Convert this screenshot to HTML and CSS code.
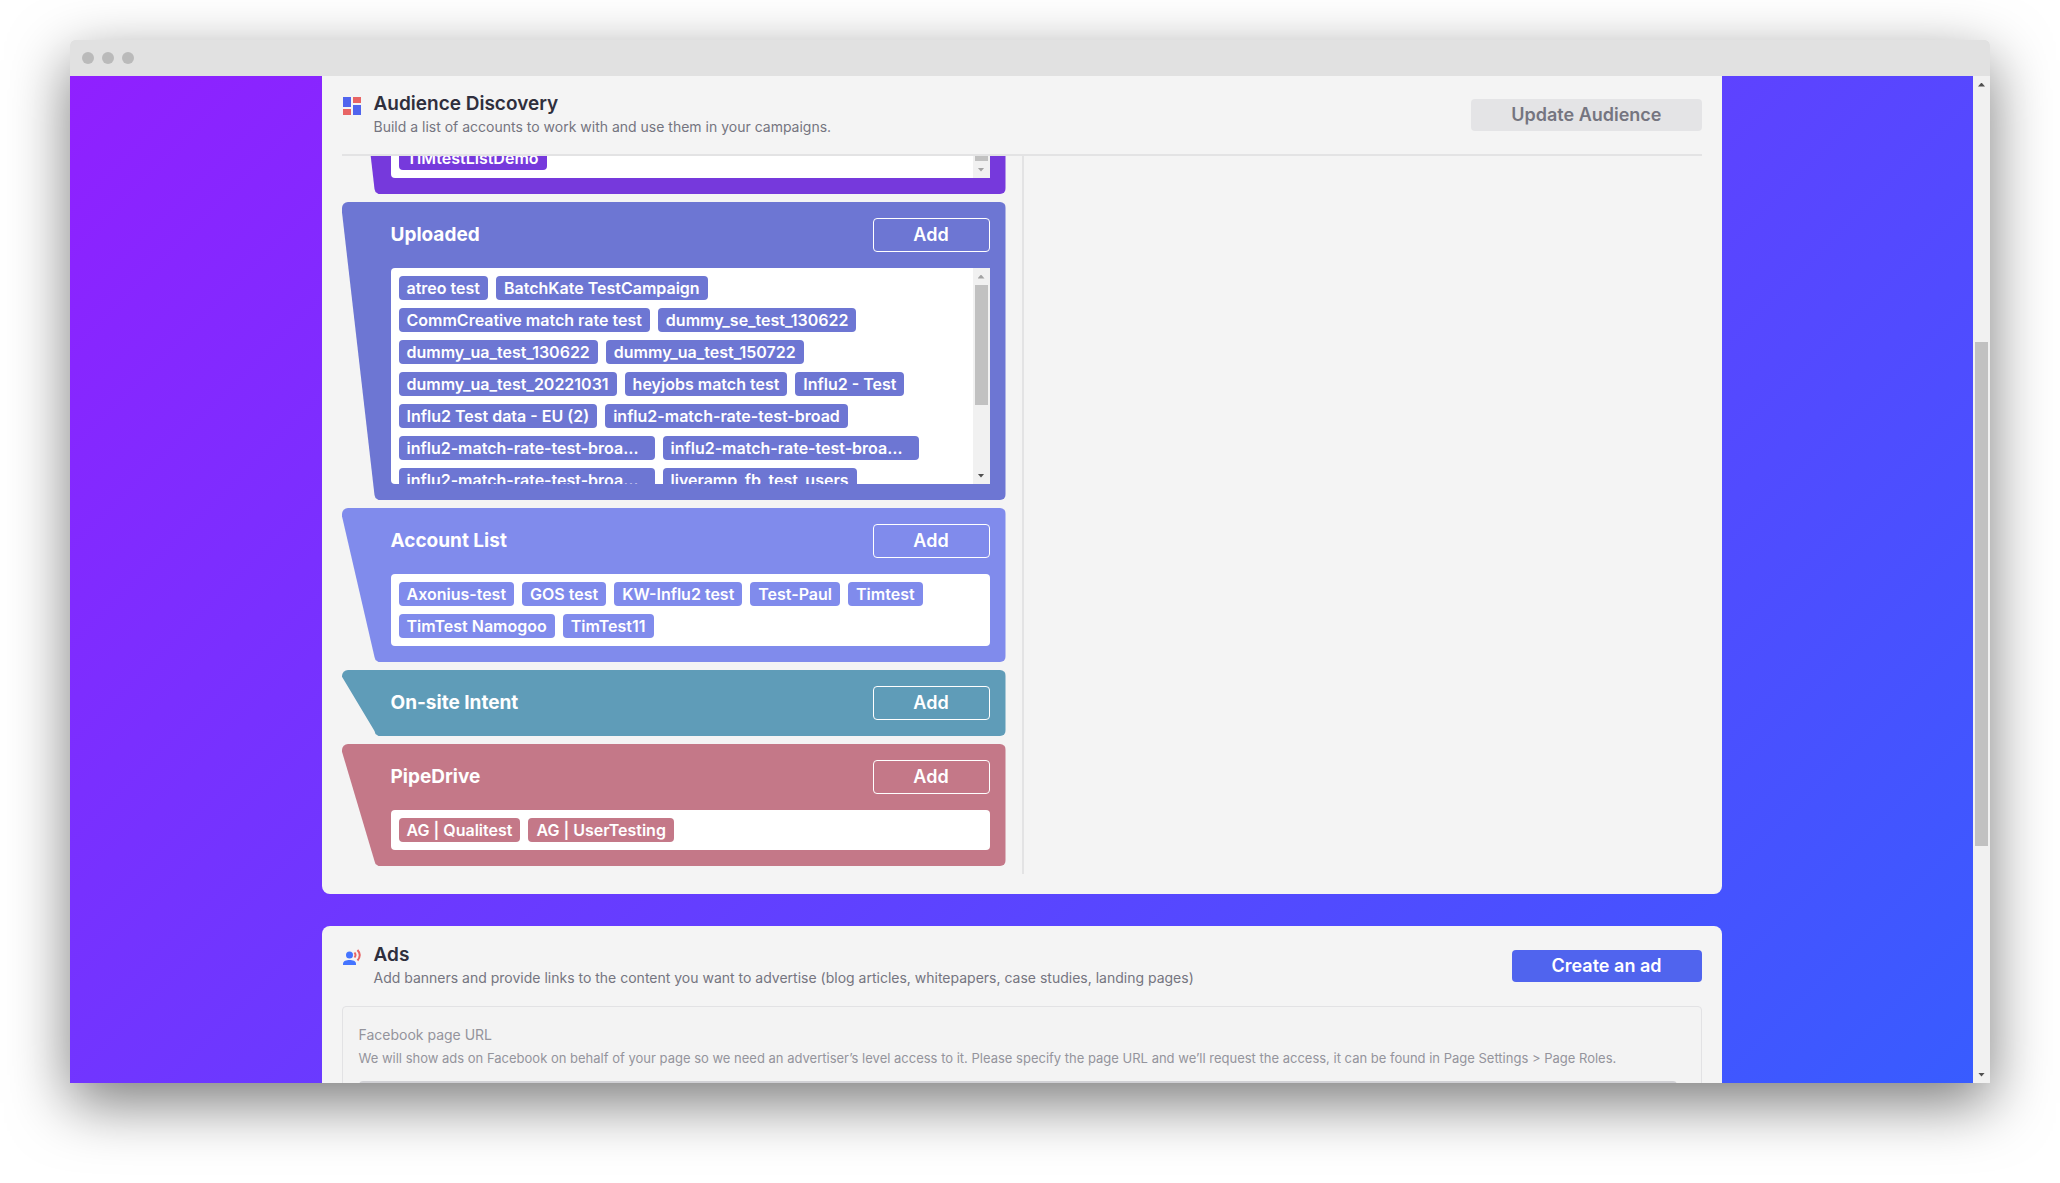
FILE: index.html
```html
<!DOCTYPE html>
<html lang="en">
<head>
<meta charset="utf-8">
<title>Audience Discovery</title>
<link rel="stylesheet" href="styles.css">
</head>
<body>
<div class="window">
  <div class="titlebar"><span class="dot"></span><span class="dot"></span><span class="dot"></span></div>
  <div class="viewport">
    <main class="page">
      <section class="panel panel-audience">
        <header class="panel-header">
          <svg class="panel-icon" viewBox="0 0 20 20" aria-hidden="true"><path fill="#5064ee" d="M1 1h8v10H1zM11 9h8v10h-8z"/><path fill="#e86464" d="M11 1h8v6h-8zM1 13h8v6H1z"/></svg>
          <div class="panel-text">
            <h2>Audience Discovery</h2>
            <p>Build a list of accounts to work with and use them in your campaigns.</p>
          </div>
          <button class="button" type="button" disabled>Update Audience</button>
        </header>
        <div class="columns">
          <div class="sources">
            <section class="source source-purple">
              <div class="list list-scroll">
                <ul class="tags tags-end"><li class="tag">TiMtestListDemo</li></ul>
                <div class="scrollbar"><span class="arrow up dim"></span><span class="thumb thumb-end"></span><span class="arrow down dim"></span></div>
              </div>
            </section>
            <section class="source source-indigo">
              <div class="source-header"><h3>Uploaded</h3><button class="add" type="button">Add</button></div>
              <div class="list list-scroll">
                <ul class="tags">
                  <li class="tag">atreo test</li><li class="tag">BatchKate TestCampaign</li>
                  <li class="tag">CommCreative match rate test</li><li class="tag">dummy_se_test_130622</li>
                  <li class="tag">dummy_ua_test_130622</li><li class="tag">dummy_ua_test_150722</li>
                  <li class="tag">dummy_ua_test_20221031</li><li class="tag">heyjobs match test</li><li class="tag">Influ2 - Test</li>
                  <li class="tag">Influ2 Test data - EU (2)</li><li class="tag">influ2-match-rate-test-broad</li>
                  <li class="tag tag-long">influ2-match-rate-test-broa…</li><li class="tag tag-long">influ2-match-rate-test-broa…</li>
                  <li class="tag tag-long">influ2-match-rate-test-broa…</li><li class="tag">liveramp_fb_test_users</li>
                </ul>
                <div class="scrollbar"><span class="arrow up dim"></span><span class="thumb thumb-list"></span><span class="arrow down"></span></div>
              </div>
            </section>
            <section class="source source-periwinkle">
              <div class="source-header"><h3>Account List</h3><button class="add" type="button">Add</button></div>
              <div class="list">
                <ul class="tags">
                  <li class="tag">Axonius-test</li><li class="tag">GOS test</li><li class="tag">KW-Influ2 test</li><li class="tag">Test-Paul</li><li class="tag">Timtest</li>
                  <li class="tag">TimTest Namogoo</li><li class="tag">TimTest11</li>
                </ul>
              </div>
            </section>
            <section class="source source-teal">
              <div class="source-header"><h3>On-site Intent</h3><button class="add" type="button">Add</button></div>
            </section>
            <section class="source source-rose">
              <div class="source-header"><h3>PipeDrive</h3><button class="add" type="button">Add</button></div>
              <div class="list">
                <ul class="tags"><li class="tag">AG | Qualitest</li><li class="tag">AG | UserTesting</li></ul>
              </div>
            </section>
          </div>
          <div class="results"></div>
        </div>
      </section>
      <section class="panel panel-ads">
        <header class="panel-header">
          <svg class="panel-icon" viewBox="0 0 20 20" aria-hidden="true"><circle cx="7.500" cy="8" r="3.500" fill="#4474ff"/><path fill="#4474ff" d="M1 18v-1.500C1 14 4.500 13 7.500 13S14 14 14 16.500V18z"/><path d="M12.500 5.500q2 2.500 0 5M15.500 3q4.500 5 0 10.500" fill="none" stroke="#e86464" stroke-width="2"/></svg>
          <div class="panel-text">
            <h2>Ads</h2>
            <p>Add banners and provide links to the content you want to advertise (blog articles, whitepapers, case studies, landing pages)</p>
          </div>
          <button class="button button-primary" type="button">Create an ad</button>
        </header>
        <div class="field">
          <label for="page-url">Facebook page URL</label>
          <p>We will show ads on Facebook on behalf of your page so we need an advertiser’s level access to it. Please specify the page URL and we’ll request the access, it can be found in Page Settings &gt; Page Roles.</p>
          <input id="page-url" type="text">
        </div>
      </section>
    </main>
    <div class="scrollbar"><span class="arrow up"></span><span class="thumb thumb-page"></span><span class="arrow down"></span></div>
  </div>
</div>
</body>
</html>
```
FILE: styles.css
```css
* { box-sizing: border-box; }
body {
  margin: 0;
  padding: 40px 70px 100px;
  background: #fff;
  color: #2f2f3d;
  font-family: Inter, "Liberation Sans", sans-serif;
}
h2, h3, p, ul { margin: 0; padding: 0; }
button { font-family: inherit; cursor: pointer; }

.window {
  display: flex;
  flex-direction: column;
  height: calc(100vh - 140px);
  border-radius: 5px 5px 0 0;
  box-shadow: 0 20px 60px rgba(0, 0, 0, 0.52);
}
.titlebar {
  display: flex;
  flex: none;
  align-items: center;
  gap: 8px;
  height: 36px;
  padding: 0 12px;
  border-radius: 5px 5px 0 0;
  background: #e1e1e1;
}
.dot { width: 12px; height: 12px; border-radius: 50%; background: #bababa; }

.viewport {
  display: flex;
  flex: 1;
  min-height: 0;
  overflow: hidden;
}
.page {
  flex: 1;
  min-width: 0;
  overflow: hidden;
  background: linear-gradient(135deg, #9020ff, #385cff);
}

.panel {
  max-width: 1400px;
  margin: 0 auto 32px;
  padding: 0 20px 20px;
  background: #f4f4f4;
}
.panel-audience { border-radius: 0 0 8px 8px; }
.panel-ads { border-radius: 8px; }
.panel-header { display: flex; align-items: center; gap: 12px; height: 80px; }
.panel-audience .panel-header { border-bottom: 2px solid #e3e3e4; }
.panel-icon { flex: none; width: 20px; height: 20px; margin-bottom: 18px; }
.panel-text { flex: 1; }
.panel-text h2 { font-size: 19px; line-height: 24px; font-weight: 600; }
.panel-text p { font-size: 14px; line-height: 22px; color: #757580; }

.button {
  height: 32px;
  padding: 0 40px;
  border: 0;
  border-radius: 4px;
  background: #e4e4e6;
  color: #757580;
  font-size: 18px;
  line-height: 30px;
  font-weight: 600;
}
.button-primary { background: #5064ee; color: #fff; }

.columns { display: grid; grid-template-columns: 1fr 1fr; }
.sources {
  display: flex;
  flex-direction: column;
  justify-content: flex-end;
  gap: 8px;
  height: 718px;
  padding: 0 16px 8px 0;
  overflow: hidden;
}
.results { border-left: 2px solid #e3e3e4; }

.source {
  flex: none;
  padding: 16px 16px 16px 49px;
  border-radius: 6px;
  background: var(--tone);
  clip-path: polygon(0 0, 100% 0, 100% 100%, 37px 100%, 34px calc(100% - 2px), 33px calc(100% - 5px), 0 6px);
}
.source-purple { --tone: #7639dc; padding-top: 66px; }
.source-indigo { --tone: #6d76d3; }
.source-periwinkle { --tone: #808bec; }
.source-teal { --tone: #5f9cb8; }
.source-rose { --tone: #c47888; }
.source-header { display: flex; align-items: center; justify-content: space-between; }
.source-header h3 { color: #fff; font-size: 19px; line-height: 24px; font-weight: 700; }
.add {
  width: 117px;
  height: 34px;
  padding: 0;
  border: 1px solid #fff;
  border-radius: 4px;
  background: transparent;
  color: #fff;
  font-size: 18px;
  line-height: 30px;
  font-weight: 600;
}

.list {
  display: flex;
  margin-top: 16px;
  border-radius: 4px;
  background: #fff;
  overflow: hidden;
}
.source-purple .list { margin-top: 0; }
.list-scroll { height: 216px; border-radius: 4px 0 0 4px; }
.tags {
  display: flex;
  flex: 1;
  flex-wrap: wrap;
  align-content: flex-start;
  gap: 8px;
  padding: 8px;
  list-style: none;
}
.tags-end { align-content: flex-end; }
.tag {
  height: 24px;
  padding: 0 8px;
  border-radius: 4px;
  background: var(--tone);
  color: #fff;
  font-size: 16px;
  line-height: 24px;
  font-weight: 600;
  white-space: nowrap;
}
.tag-long { width: 256px; }

.scrollbar {
  display: flex;
  flex: none;
  flex-direction: column;
  align-items: center;
  width: 17px;
  background: #f1f1f1;
}
.arrow { display: flex; flex: none; align-items: center; justify-content: center; height: 17px; color: #505050; }
.arrow::before { content: ""; width: 7px; height: 4px; background: currentColor; }
.arrow.dim { color: #a3a3a3; }
.arrow.up::before { clip-path: polygon(50% 0, 100% 100%, 0 100%); }
.arrow.down::before { clip-path: polygon(0 0, 100% 0, 50% 100%); }
.arrow.down { margin-top: auto; }
.thumb { width: 13px; background: #c1c1c1; }
.thumb-list { height: 120px; }
.thumb-end { height: 120px; margin-top: 62px; }
.thumb-page { height: 50%; margin-top: 249px; }

.field {
  display: flex;
  flex-direction: column;
  padding: 16px;
  border: 1px solid #e2e2e4;
  border-radius: 4px;
  background: #f3f3f3;
  color: #94949c;
}
.field label { font-size: 14px; line-height: 24px; }
.field p { font-size: 13px; line-height: 22px; }
.field input {
  height: 36px;
  margin: 12px 8px 0 0;
  border: 2px solid #d0d0d4;
  border-radius: 4px;
  background: #f3f3f3;
}
```
